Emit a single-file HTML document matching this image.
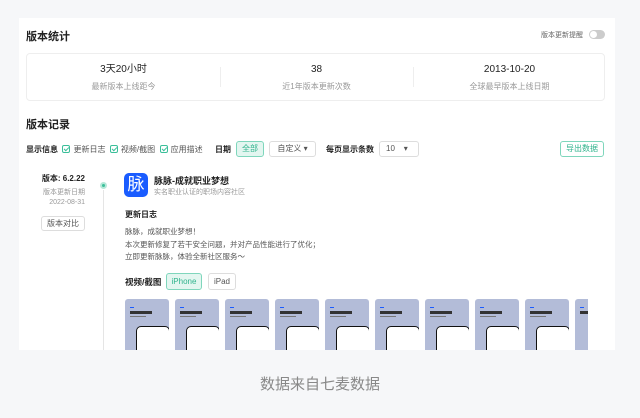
<!DOCTYPE html>
<html><head><meta charset="utf-8"><style>
*{margin:0;padding:0;box-sizing:border-box}
body{width:640px;height:418px;background:#f6f7f9;font-family:"Liberation Sans","Noto Sans CJK SC",sans-serif;position:relative;overflow:hidden;color:#222}
.card{position:absolute;left:19px;top:18px;width:596px;height:332px;background:#fff;overflow:hidden}
.a{position:absolute;white-space:nowrap}
.n{line-height:14px;height:14px}
.t{font-size:11px;font-weight:bold;color:#222}
.g{color:#999}
.stat{position:absolute;left:7px;top:35px;width:579px;height:48px;border:1px solid #eee;border-radius:4px}
.cb{display:inline-block;width:8px;height:8px;border:1px solid #3bbf9a;border-radius:2px;vertical-align:-1px;margin-right:3px;position:relative}
.cb:after{content:"";position:absolute;left:2px;top:0px;width:2px;height:4px;border:solid #3bbf9a;border-width:0 1px 1px 0;transform:rotate(45deg)}
.btn{position:absolute;border:1px solid #ddd;border-radius:3px;font-size:8px;color:#555;text-align:center}
.shot{position:absolute;top:281px;width:44px;height:60px;background:#b3bcd8;border-radius:3px;overflow:hidden}
.shot i{position:absolute;left:5px;top:8px;width:4px;height:1px;background:#1a5cff}
.shot b{position:absolute;left:5px;top:12px;width:22px;height:3px;background:#333}
.shot s{position:absolute;left:5px;top:17px;width:16px;height:1px;background:#777}
.shot u{position:absolute;left:11px;top:27px;width:34px;height:40px;background:#fff;border:1.5px solid #111;border-radius:5px}
</style></head><body>
<div class="card">
<div class="a t" style="left:7px;top:10px;font-size:11px">版本统计</div>
<div class="a g" style="left:522px;top:12px;font-size:7px;color:#666">版本更新提醒</div>
<div class="a" style="left:570px;top:12px;width:16px;height:9px;border-radius:5px;background:#ccc"><div style="position:absolute;left:1px;top:1px;width:7px;height:7px;border-radius:50%;background:#fff"></div></div>
<div class="stat">
<div class="a n" style="left:0;width:193px;top:9px;text-align:center;font-size:10px">3天20小时</div>
<div class="a g" style="left:0;width:193px;top:27px;text-align:center;font-size:8px">最新版本上线距今</div>
<div class="a" style="left:193px;top:13px;width:1px;height:20px;background:#eee"></div>
<div class="a n" style="left:193px;width:193px;top:9px;text-align:center;font-size:10px">38</div>
<div class="a g" style="left:193px;width:193px;top:27px;text-align:center;font-size:8px">近1年版本更新次数</div>
<div class="a" style="left:386px;top:13px;width:1px;height:20px;background:#eee"></div>
<div class="a n" style="left:386px;width:193px;top:9px;text-align:center;font-size:10px">2013-10-20</div>
<div class="a g" style="left:386px;width:193px;top:27px;text-align:center;font-size:8px">全球最早版本上线日期</div>
</div>
<div class="a t" style="left:7px;top:98px;font-size:11px">版本记录</div>
<div class="a" style="left:7px;top:126px;font-size:8px;color:#555"><b style="color:#222">显示信息</b>&nbsp; <span class="cb"></span>更新日志&nbsp; <span class="cb"></span>视频/截图&nbsp; <span class="cb"></span>应用描述</div>
<div class="a" style="left:196px;top:126px;font-size:8px;font-weight:bold">日期</div>
<div class="btn" style="left:217px;top:123px;width:28px;height:16px;line-height:14px;background:#e3f6f0;border-color:#7fd6bc;color:#2fb38c">全部</div>
<div class="btn" style="left:250px;top:123px;width:47px;height:16px;line-height:14px">自定义 ▾</div>
<div class="a" style="left:307px;top:126px;font-size:8px;font-weight:bold">每页显示条数</div>
<div class="btn" style="left:360px;top:123px;width:40px;height:16px;line-height:14px;text-align:left;padding-left:6px">10 &nbsp;&nbsp;&nbsp;▾</div>
<div class="btn" style="left:541px;top:123px;width:44px;height:16px;line-height:14px;border-color:#7fd6bc;color:#2fb38c">导出数据</div>
<div class="a" style="left:0;width:66px;text-align:right;top:155px;font-size:8px;font-weight:bold">版本: 6.2.22</div>
<div class="a g" style="left:0;width:66px;text-align:right;top:169px;font-size:7px">版本更新日期</div>
<div class="a g" style="left:0;width:66px;text-align:right;top:181px;font-size:7px">2022-08-31</div>
<div class="btn" style="left:22px;top:198px;width:44px;height:15px;line-height:13px">版本对比</div>
<div class="a" style="left:84px;top:172px;width:1px;height:170px;background:#e5e5e5"></div>
<div class="a" style="left:81px;top:164px;width:7px;height:7px;border-radius:50%;border:2px solid #b5e8d8;background:#3bbf9a"></div>
<div class="a" style="left:105px;top:155px;width:24px;height:24px;border-radius:5px;background:#1a5cff;color:#fff;font-size:17px;text-align:center;line-height:24px">脉</div>
<div class="a" style="left:135px;top:156px;font-size:9px;font-weight:bold">脉脉-成就职业梦想</div>
<div class="a g" style="left:135px;top:169px;font-size:7px">实名职业认证的职场内容社区</div>
<div class="a" style="left:106px;top:191px;font-size:8px;font-weight:bold">更新日志</div>
<div class="a" style="left:106px;top:208px;font-size:7.5px;color:#555;line-height:12.5px">脉脉，成就职业梦想！<br>本次更新修复了若干安全问题，并对产品性能进行了优化；<br>立即更新脉脉，体验全新社区服务～</div>
<div class="a" style="left:106px;top:258px;font-size:8.5px;font-weight:bold">视频/截图</div>
<div class="btn" style="left:147px;top:255px;width:36px;height:17px;line-height:15px;background:#e3f6f0;border-color:#7fd6bc;color:#2fb38c">iPhone</div>
<div class="btn" style="left:189px;top:255px;width:28px;height:17px;line-height:15px">iPad</div>
<div class="shot" style="left:106px"><i></i><b></b><s></s><u></u></div>
<div class="shot" style="left:156px"><i></i><b></b><s></s><u></u></div>
<div class="shot" style="left:206px"><i></i><b></b><s></s><u></u></div>
<div class="shot" style="left:256px"><i></i><b></b><s></s><u></u></div>
<div class="shot" style="left:306px"><i></i><b></b><s></s><u></u></div>
<div class="shot" style="left:356px"><i></i><b></b><s></s><u></u></div>
<div class="shot" style="left:406px"><i></i><b></b><s></s><u></u></div>
<div class="shot" style="left:456px"><i></i><b></b><s></s><u></u></div>
<div class="shot" style="left:506px"><i></i><b></b><s></s><u></u></div>
<div class="shot" style="left:556px;width:13px;border-radius:3px 0 0 3px"><i></i><b style="width:9px"></b></div>
</div>
<div class="a" style="left:0;width:640px;top:373px;text-align:center;font-size:15px;color:#888">数据来自七麦数据</div>
</body></html>
